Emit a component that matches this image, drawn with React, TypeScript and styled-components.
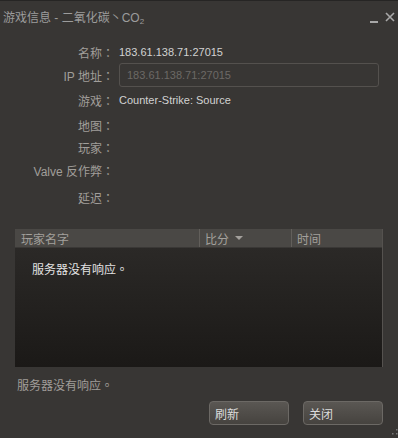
import React from 'react';
import styled, { createGlobalStyle } from 'styled-components';

const GlobalStyle = createGlobalStyle`
  html, body {
    margin: 0;
    padding: 0;
    background: #383634;
  }
  * {
    box-sizing: border-box;
  }
`;

const rows = [
  { label: '名称', value: '183.61.138.71:27015', h: 20 },
  { label: 'IP 地址', input: '183.61.138.71:27015', h: 26 },
  { label: '游戏', value: 'Counter-Strike: Source', h: 24 },
  { label: '地图', h: 26 },
  { label: '玩家', h: 18 },
  { label: 'Valve 反作弊', h: 28 },
  { label: '延迟', h: 26 },
];

export default function App() {
  return (
    <>
      <GlobalStyle />
      <Window>
        <TitleBar>
          <Title>
            游戏信息 - 二氧化碳丶CO<sub>2</sub>
          </Title>
          <Controls>
            <Minimize />
            <svg width="10" height="10" viewBox="0 0 10 10">
              <path d="M1 1 L9 9 M9 1 L1 9" stroke="#a8a8a8" strokeWidth="1.6" />
            </svg>
          </Controls>
        </TitleBar>
        <InfoGrid>
          {rows.map((r) => (
            <InfoRow key={r.label} $h={r.h}>
              <Label>
                {r.label}
                <Punct>：</Punct>
              </Label>
              {r.input ? (
                <Field>{r.input}</Field>
              ) : (
                <Value>{r.value}</Value>
              )}
            </InfoRow>
          ))}
        </InfoGrid>
        <Table>
          <HeaderRow>
            <HeadCell $w={184}>玩家名字</HeadCell>
            <HeadCell $w={92} $sep>
              比分 <Caret />
            </HeadCell>
            <HeadCell $sep>时间</HeadCell>
          </HeaderRow>
          <TableBody>
            <Empty>
              服务器没有响应<Punct>。</Punct>
            </Empty>
          </TableBody>
        </Table>
        <Status>
          服务器没有响应<Punct>。</Punct>
        </Status>
        <Buttons>
          <Button>刷新</Button>
          <Button>关闭</Button>
        </Buttons>
        <Grip width="6" height="8" viewBox="0 0 6 8">
          <rect x="4" y="0" width="1.5" height="1.5" fill="#777" />
          <rect x="4" y="4" width="1.5" height="1.5" fill="#777" />
          <rect x="0" y="4" width="1.5" height="1.5" fill="#777" />
        </Grip>
      </Window>
    </>
  );
}

const Window = styled.div`
  position: relative;
  width: 398px;
  height: 438px;
  background-color: #383634;
  border-top: 1px solid #262524;
  display: flex;
  flex-direction: column;
  font-family: 'Liberation Sans', 'Noto Sans CJK SC', sans-serif;
  overflow: hidden;
`;

const TitleBar = styled.div`
  height: 33px;
  display: flex;
  align-items: center;
  justify-content: space-between;
  padding: 0 3px 1px 3px;
`;

const Title = styled.div`
  font-size: 12px;
  color: #9c9c9c;
  sub {
    font-size: 8px;
    vertical-align: -2px;
  }
`;

const Controls = styled.div`
  display: flex;
  align-items: center;
  gap: 7px;
`;

const Minimize = styled.div`
  width: 8px;
  height: 2px;
  background: #a8a8a8;
  margin-top: 9px;
`;

const InfoGrid = styled.div`
  display: flex;
  flex-direction: column;
  margin-top: 8px;
`;

const InfoRow = styled.div<{ $h: number }>`
  height: ${(p) => p.$h}px;
  display: grid;
  grid-template-columns: 114px 260px;
  column-gap: 5px;
  align-items: center;
`;

const Label = styled.div`
  text-align: right;
  font-size: 12px;
  color: #a19e9a;
  white-space: nowrap;
`;

// centred full-width punctuation, as in the original
const Punct = styled.span`
  font-family: 'Noto Sans CJK TC', sans-serif;
`;

const Value = styled.div`
  font-size: 11px;
  color: #d2d2d2;
  white-space: nowrap;
`;

const Field = styled.div`
  height: 24px;
  border: 1px solid #54514e;
  border-radius: 3px;
  padding-left: 7px;
  display: flex;
  align-items: center;
  font-size: 11px;
  color: #6c6966;
`;

const Table = styled.div`
  margin: 19px 15px 0 15px;
  border-right: 1px solid #55524f;
  display: flex;
  flex-direction: column;
`;

const HeaderRow = styled.div`
  height: 19px;
  background-color: #4a4845;
  display: flex;
  border-bottom: 1px solid #3a3836;
`;

const HeadCell = styled.div<{ $w?: number; $sep?: boolean }>`
  ${(p) => (p.$w ? `width: ${p.$w}px;` : 'flex: 1;')}
  display: flex;
  align-items: center;
  padding-left: ${(p) => (p.$sep ? '5px' : '6px')};
  border-left: ${(p) => (p.$sep ? '1px solid #625f5b' : 'none')};
  font-size: 12px;
  color: #a3a09c;
`;

const Caret = styled.span`
  display: inline-block;
  margin-left: 6px;
  width: 0;
  height: 0;
  border-left: 4px solid transparent;
  border-right: 4px solid transparent;
  border-top: 4px solid #a3a09c;
`;

const TableBody = styled.div`
  height: 119px;
  background: linear-gradient(#2b2927, #1b1917);
  padding: 12px 0 0 17px;
`;

const Empty = styled.div`
  font-size: 12px;
  color: #e2e2e2;
`;

const Status = styled.div`
  margin: 9px 0 0 17px;
  font-size: 12px;
  color: #a09d99;
`;

const Buttons = styled.div`
  display: flex;
  justify-content: flex-end;
  gap: 14px;
  margin: 8px 15px 0 0;
`;

const Button = styled.button`
  width: 80px;
  height: 24px;
  border: 1px solid #6c6965;
  border-radius: 4px;
  background: linear-gradient(#5a5753, #46433f);
  color: #dcdcdc;
  font-family: 'Liberation Sans', 'Noto Sans CJK SC', sans-serif;
  font-size: 12px;
  text-align: left;
  padding: 0 0 0 5px;
`;

const Grip = styled.svg`
  position: absolute;
  right: 0;
  bottom: 1px;
`;
